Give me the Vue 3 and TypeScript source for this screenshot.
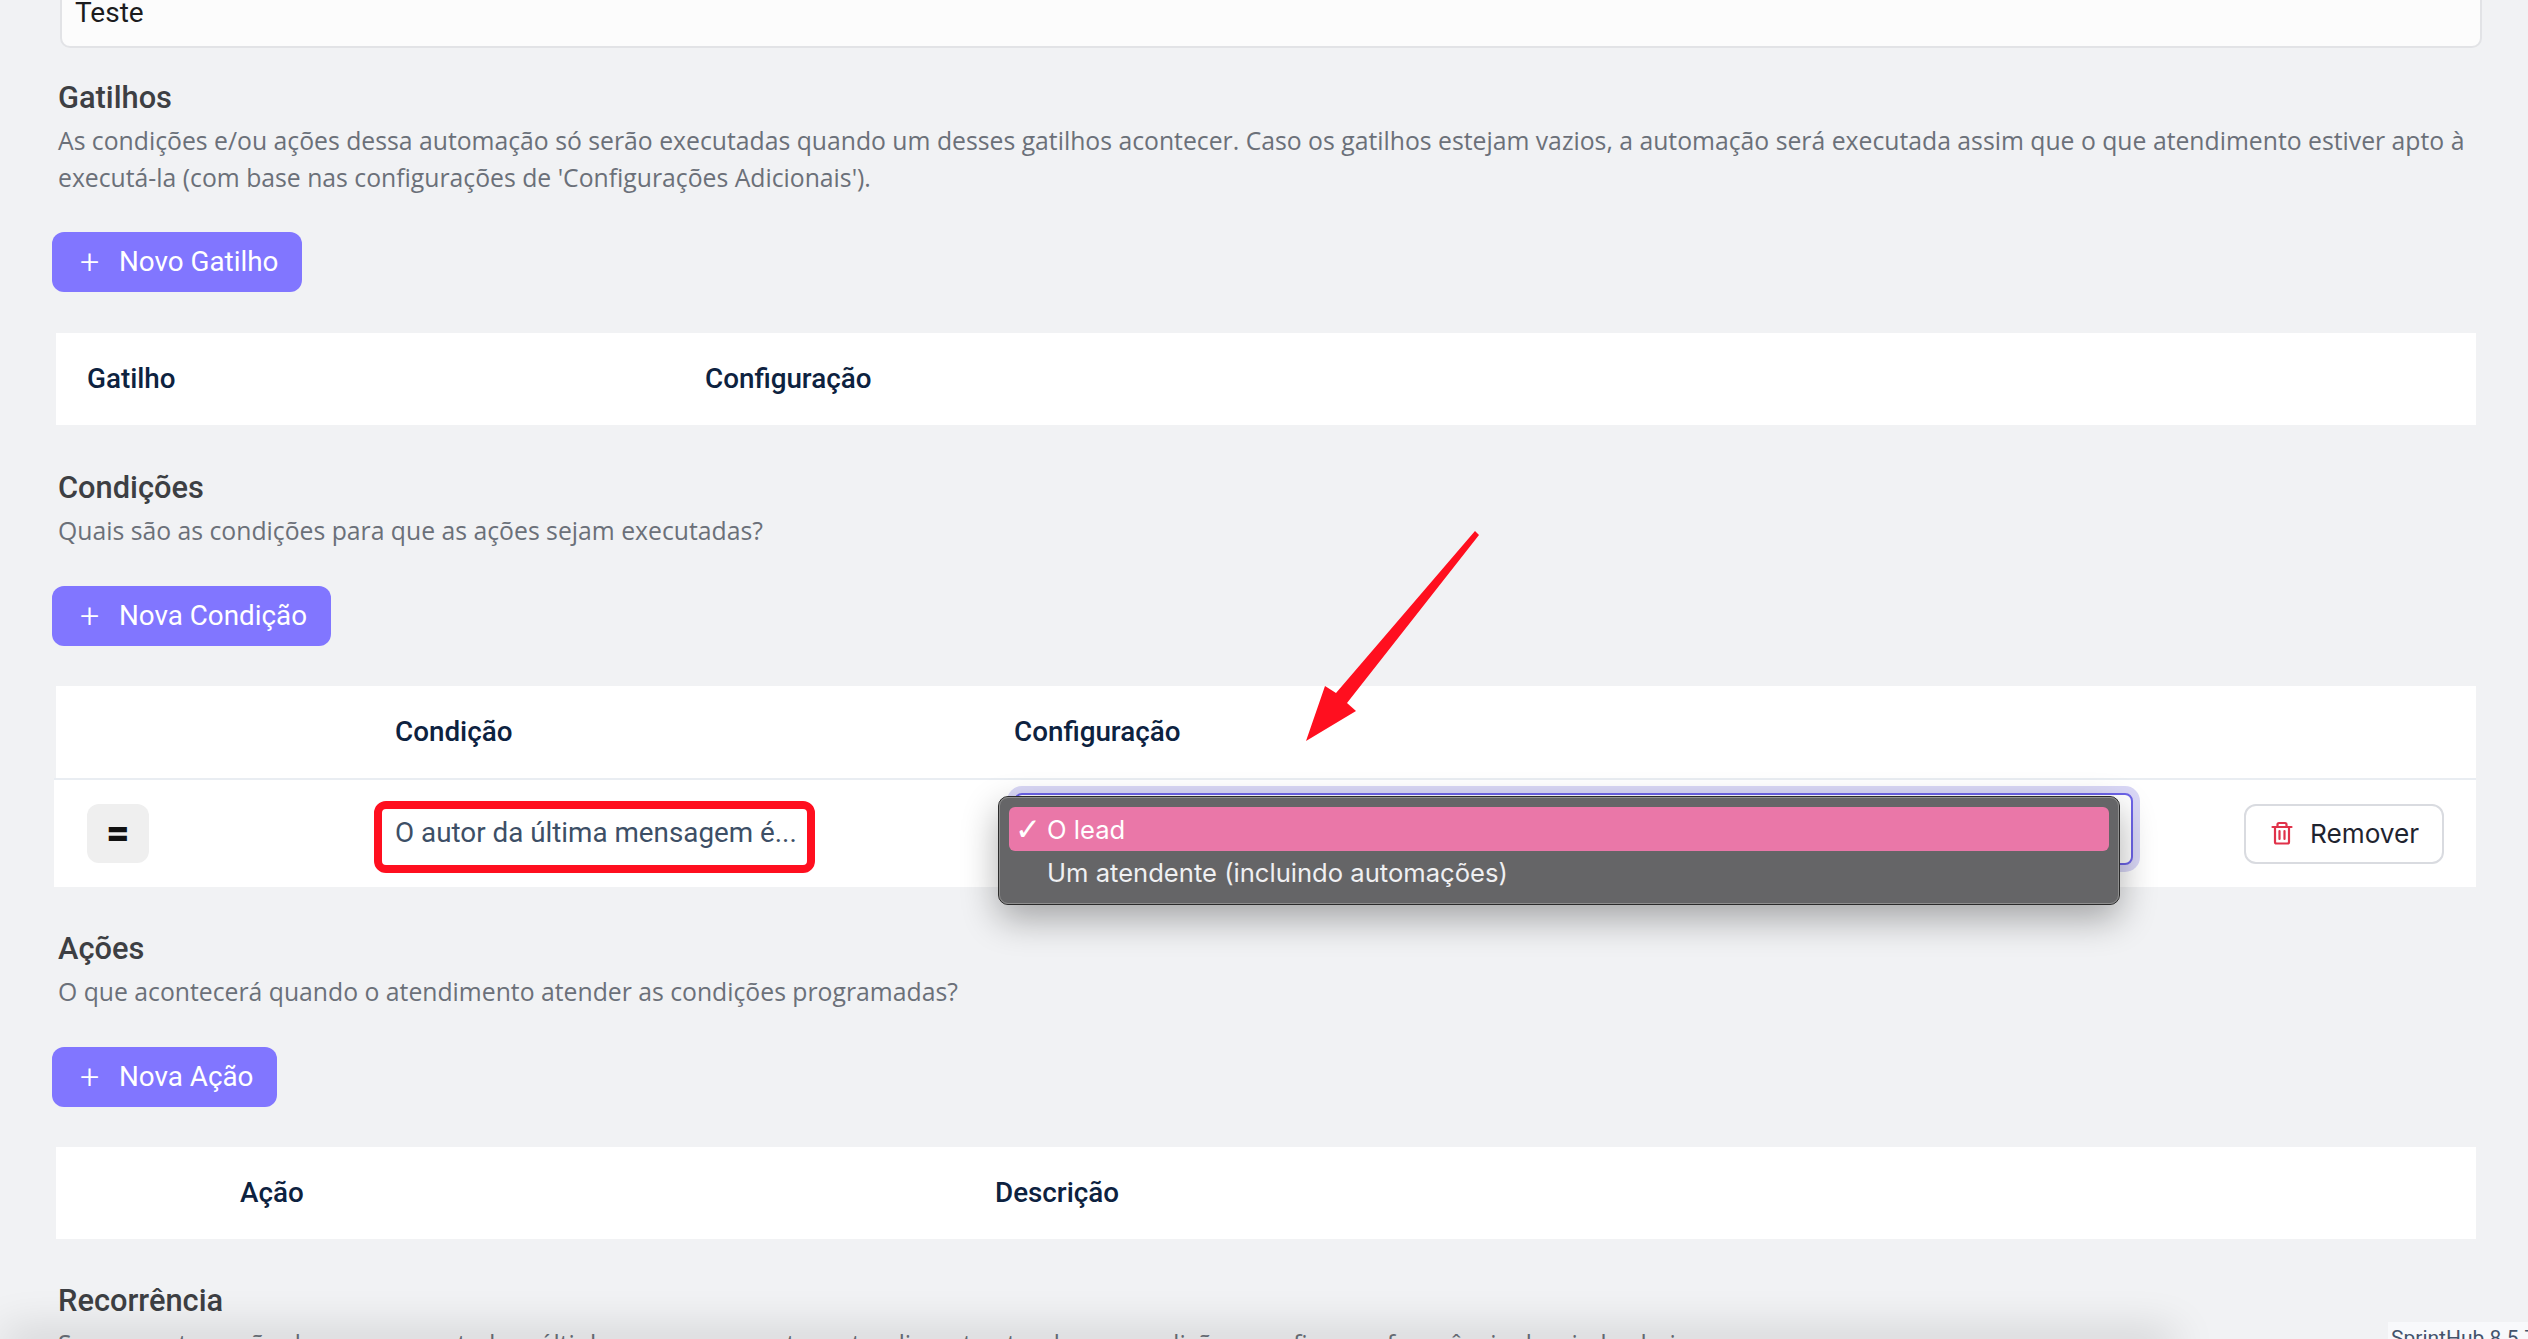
<script setup lang="ts">
interface Section {
  title: string
  desc: string[]
  button: string
}
const triggers: Section = {
  title: 'Gatilhos',
  desc: [
    "As condições e/ou ações dessa automação só serão executadas quando um desses gatilhos acontecer. Caso os gatilhos estejam vazios, a automação será executada assim que o que atendimento estiver apto à",
    "executá-la (com base nas configurações de 'Configurações Adicionais').",
  ],
  button: 'Novo Gatilho',
}
</script>

<template>
  <div class="page">
    <div class="name-input">Teste</div>

    <section class="block first">
      <h2>{{ triggers.title }}</h2>
      <p v-for="line in triggers.desc" :key="line">{{ line }}</p>
      <button class="add tight"><span class="plus">+</span>{{ triggers.button }}</button>
      <div class="table head-only trig"><span>Gatilho</span><span>Configuração</span></div>
    </section>

    <section class="block second">
      <h2>Condições</h2>
      <p>Quais são as condições para que as ações sejam executadas?</p>
      <button class="add"><span class="plus">+</span>Nova Condição</button>
      <div class="cond">
        <div class="table head-only cond-head"><span>Condição</span><span>Configuração</span></div>
        <div class="cond-row">
          <div class="eq">=</div>
          <div class="cond-text">O autor da última mensagem é...</div>
          <div class="select"></div>
          <button class="remove">
            <svg width="24" height="24" viewBox="0 0 24 24" fill="none" stroke="#e0324a" stroke-width="2.2" stroke-linejoin="round" stroke-linecap="round">
              <path d="M2.5 6h19" />
              <path d="M7.5 6V3.5A1.5 1.5 0 0 1 9 2h6a1.5 1.5 0 0 1 1.5 1.5V6" />
              <path d="M5 6v15a1.5 1.5 0 0 0 1.5 1.5h11A1.5 1.5 0 0 0 19 21V6" />
              <path d="M9.5 10v8M14.5 10v8" />
            </svg>
            Remover
          </button>
          <div class="red-box"></div>
          <div class="menu">
            <div class="opt on"><span class="check">✓</span>O lead</div>
            <div class="opt">Um atendente (incluindo automações)</div>
          </div>
        </div>
      </div>
    </section>

    <section class="block">
      <h2>Ações</h2>
      <p>O que acontecerá quando o atendimento atender as condições programadas?</p>
      <button class="add"><span class="plus">+</span>Nova Ação</button>
      <div class="table head-only acao"><span>Ação</span><span>Descrição</span></div>
    </section>

    <section class="block">
      <h2>Recorrência</h2>
      <p>Se essa automação deve ser executada múltiplas vezes enquanto o atendimento atender as condições, configure a frequência desejada abaixo.</p>
    </section>

    <svg class="arrow" width="2528" height="1339" viewBox="0 0 2528 1339">
      <polygon points="1475,531 1479,535 1347,703 1356,711 1306,741 1325,686 1336,693" fill="#ff0f1f" />
    </svg>
    <div class="bottom-shadow"></div>
    <div class="version">SprintHub 8.5.7</div>
  </div>
</template>

<style scoped>
.page {
  position: relative;
  width: 2528px;
  height: 1339px;
  overflow: hidden;
  background: #f1f2f4;
  padding-left: 58px;
  box-sizing: border-box;
  font-family: Roboto, sans-serif;
}
.name-input {
  margin: -20px 46px 0 2px;
  width: 2422px;
  height: 68px;
  box-sizing: border-box;
  background: #fcfcfc;
  border: 2px solid #e2e3e6;
  border-radius: 10px;
  padding: 15px 0 0 13px;
  font-size: 28px;
  line-height: 32px;
  color: #1c1c1e;
}
.block {
  margin-top: 42px;
}
.block.first {
  margin-top: 30px;
}
.block.second {
  margin-top: 43px;
}
h2 {
  margin: 0;
  font-size: 30.8px;
  line-height: 40px;
  font-weight: 500;
  color: #3d3f43;
}
p {
  margin: 0;
  font-family: "Open Sans", sans-serif;
  font-size: 24.76px;
  line-height: 37px;
  color: #6b7079;
  white-space: nowrap;
}
h2 + p {
  margin-top: 4px;
}
.add {
  display: flex;
  align-items: center;
  height: 60px;
  margin: 37px 0 40px -6px;
  padding: 0 24px 2px 28px;
  border: none;
  border-radius: 12px;
  background: #8176ff;
  color: #fff;
  font-family: Roboto, sans-serif;
  font-size: 27.8px;
}
.add.tight {
  margin-top: 36px;
  margin-bottom: 41px;
}
.plus {
  width: 39px;
  font-size: 34px;
  font-weight: 300;
  text-align: left;
}
.table {
  margin-left: -2px;
  width: 2420px;
  height: 92px;
  padding-bottom: 2px;
  background: #fff;
  align-items: center;
  font-size: 27.8px;
  font-weight: 500;
  color: #0d2240;
}
.head-only {
  display: grid;
}
.trig {
  grid-template-columns: 618px 1fr;
  padding-left: 31px;
  box-sizing: border-box;
}
.cond-head {
  grid-template-columns: 619px 1fr;
  padding-left: 339px;
  box-sizing: border-box;
}
.acao {
  grid-template-columns: 755px 1fr;
  padding-left: 184px;
  box-sizing: border-box;
}
.cond-row {
  position: relative;
  margin: 0 0 0 -4px;
  width: 2422px;
  height: 109px;
  box-sizing: border-box;
  border-top: 2px solid #e9edf2;
  background: #fff;
}
.eq {
  position: absolute;
  left: 33px;
  top: 24px;
  width: 62px;
  height: 59px;
  border-radius: 12px;
  background: #efefef;
  text-align: center;
  line-height: 59px;
  font-size: 40px;
  font-weight: 900;
  color: #111;
}
.cond-text {
  position: absolute;
  left: 341px;
  top: 37px;
  font-size: 27.8px;
  line-height: 32px;
  color: #3d4f66;
}
.select {
  position: absolute;
  left: 960px;
  top: 13px;
  width: 1119px;
  height: 72px;
  box-sizing: border-box;
  border: 2px solid #6c63e8;
  border-radius: 8px;
  background: #fff;
  box-shadow: 0 0 0 7px #d9d7f6;
}
.remove {
  position: absolute;
  left: 2190px;
  top: 24px;
  width: 200px;
  height: 60px;
  box-sizing: border-box;
  display: flex;
  align-items: center;
  gap: 16px;
  padding: 0 0 2px 24px;
  background: #fff;
  border: 2px solid #d9dbe0;
  border-radius: 12px;
  font-family: Inter, sans-serif;
  font-size: 26.2px;
  color: #1f2430;
}
.red-box {
  position: absolute;
  left: 320px;
  top: 21px;
  width: 441px;
  height: 72px;
  box-sizing: border-box;
  border: 8px solid #ff0f1f;
  border-radius: 12px;
}
.menu {
  position: absolute;
  left: 944px;
  top: 16px;
  width: 1122px;
  height: 109px;
  box-sizing: border-box;
  padding: 10px;
  background: #656567;
  border: 1px solid #2b2b2b;
  outline: 1px solid #8f8f8f;
  outline-offset: -2px;
  border-radius: 10px;
  box-shadow: 0 14px 36px rgba(0, 0, 0, 0.32);
  font-family: Inter, sans-serif;
  font-size: 25.6px;
  color: #f0f0f2;
}
.opt {
  position: relative;
  height: 44px;
  line-height: 46px;
  padding-left: 38px;
  margin-bottom: -1px;
  border-radius: 6px;
}
.opt.on {
  background: #ea77a8;
  color: #fff;
}
.check {
  position: absolute;
  left: 6px;
  font-family: "DejaVu Sans", sans-serif;
  font-size: 31px;
  line-height: 44px;
}
.arrow {
  position: absolute;
  left: 0;
  top: 0;
  pointer-events: none;
}
.bottom-shadow {
  position: absolute;
  left: 10px;
  right: 360px;
  bottom: -12px;
  height: 12px;
  box-shadow: 0 0 44px 6px rgba(0, 0, 0, 0.18);
}
.version {
  position: absolute;
  left: 2388px;
  top: 1322px;
  height: 24px;
  padding: 4px 3px 0;
  background: #f8f9fb;
  font-size: 21px;
  line-height: 24px;
  color: #44546c;
  white-space: nowrap;
}
</style>
